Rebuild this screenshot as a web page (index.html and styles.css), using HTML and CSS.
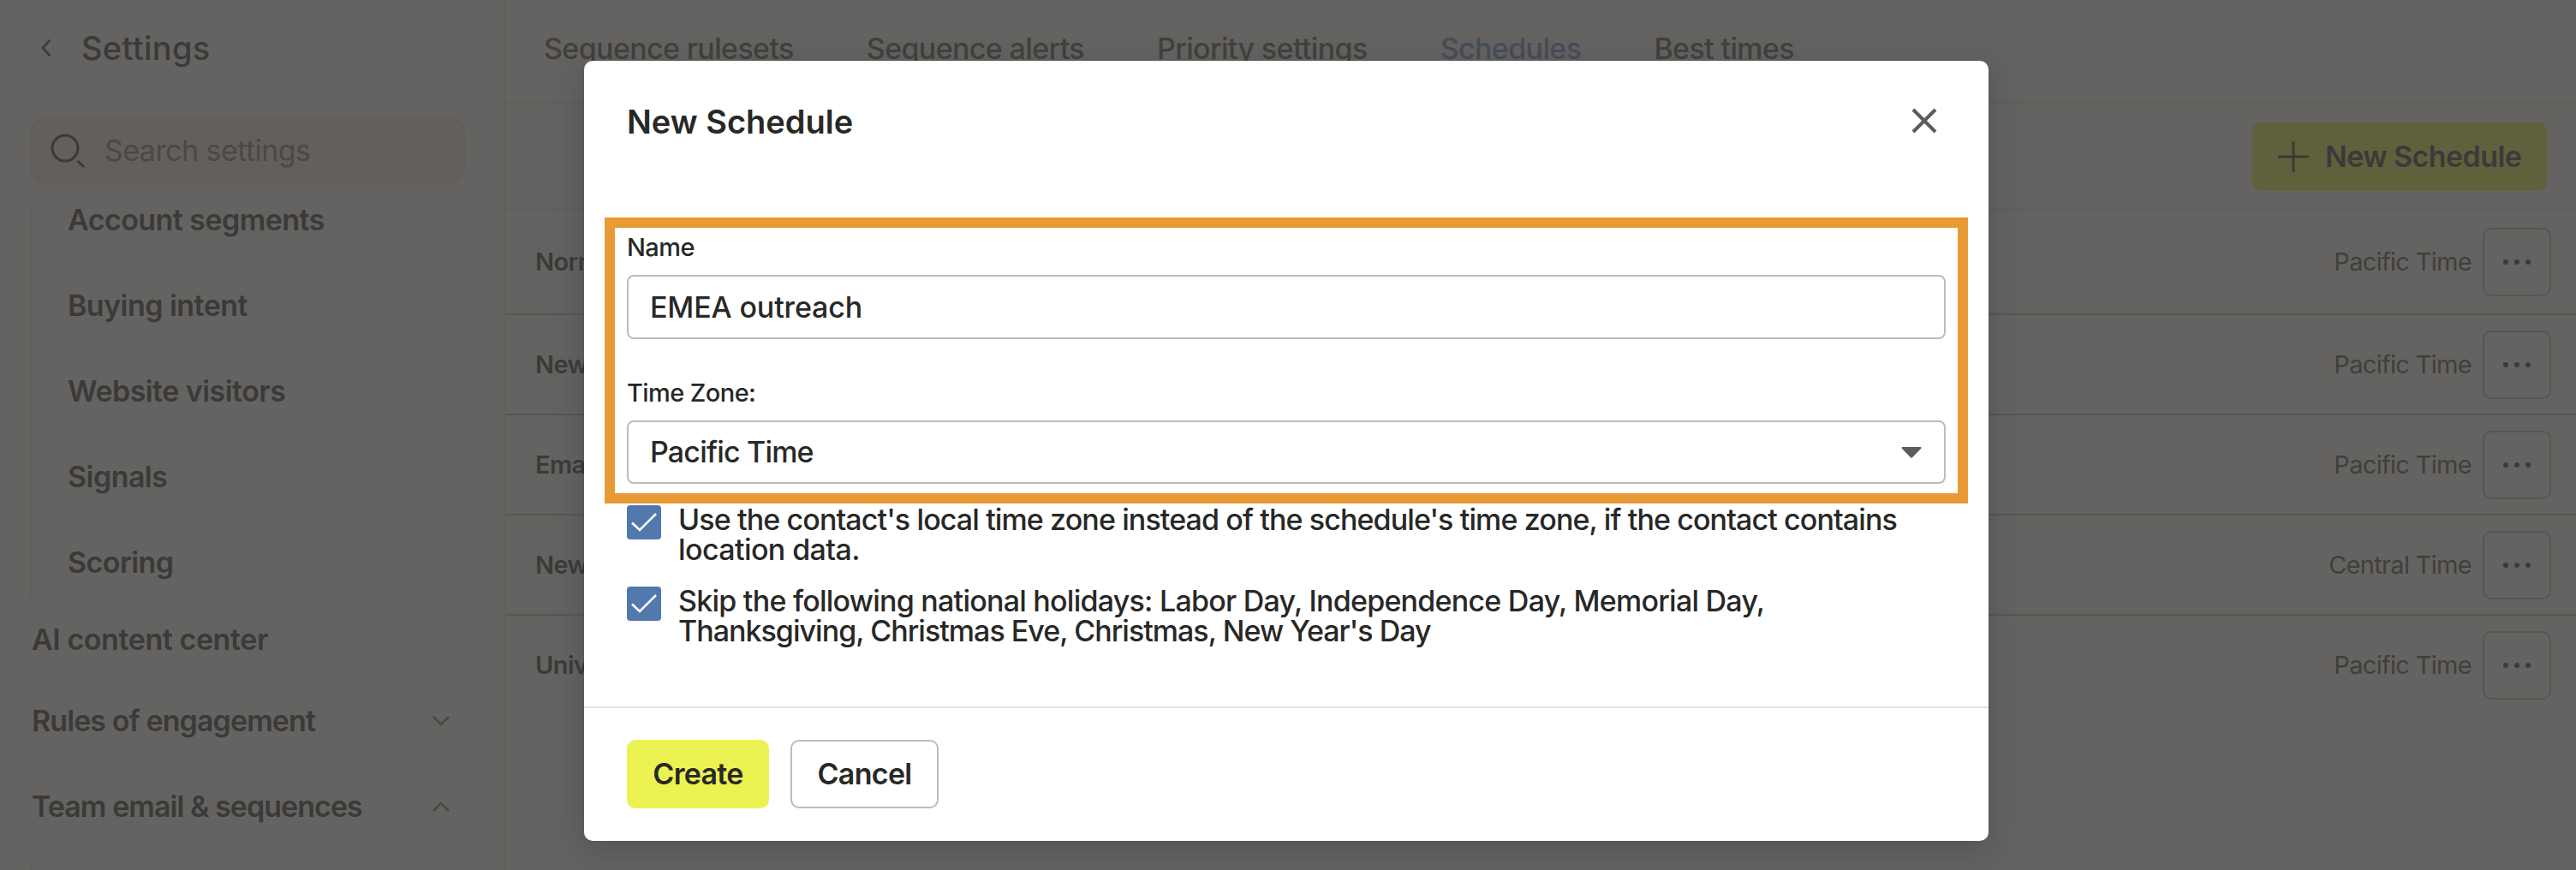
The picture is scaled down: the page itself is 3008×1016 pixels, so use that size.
FILE: index.html
```html
<!DOCTYPE html>
<html lang="en">
<head>
    <meta charset="UTF-8">
    <title>Schedules - Settings</title>
    <link rel="stylesheet" href="styles.css">
</head>
<body>
    <div id="app">
        <div class="sidebar">
            <div class="side-head">
                <svg class="back" width="12" height="22" viewBox="0 0 12 22"><path d="M10.500 1.500 2 11l8.500 9.500"/></svg>
                <span>Settings</span>
            </div>
            <div class="search">
                <svg width="42" height="42" viewBox="0 0 42 42"><circle cx="18" cy="18" r="15"/><path d="M32.500 33l7.500 7"/></svg>
                <span>Search settings</span>
            </div>
            <div class="nav">
                <ul class="sub">
                    <li>Account segments</li>
                    <li>Buying intent</li>
                    <li>Website visitors</li>
                    <li>Signals</li>
                    <li>Scoring</li>
                </ul>
                <div class="group ai">AI content center</div>
                <div class="group rules">
                    Rules of engagement
                    <svg width="22" height="14" viewBox="0 0 22 14"><path d="M2 2l9 9 9-9"/></svg>
                </div>
                <div class="group team">
                    Team email &amp; sequences
                    <svg width="22" height="14" viewBox="0 0 22 14"><path d="M2 12l9-9 9 9"/></svg>
                </div>
                <ul class="sub next"></ul>
            </div>
        </div>
        <div class="main">
            <ul class="tabs">
                <li>Sequence rulesets</li>
                <li>Sequence alerts</li>
                <li>Priority settings</li>
                <li class="current">Schedules</li>
                <li>Best times</li>
            </ul>
            <div class="toolbar">
                <div class="new-btn">
                    <svg width="36" height="36" viewBox="0 0 36 36"><path d="M18 0v36M0 18h36"/></svg>
                    <span>New Schedule</span>
                </div>
            </div>
            <ul class="rows">
                <li>
                    <b>Normal</b><span>Pacific Time</span>
                    <i class="more"><em></em><em></em><em></em></i>
                </li>
                <li>
                    <b>New</b><span>Pacific Time</span>
                    <i class="more"><em></em><em></em><em></em></i>
                </li>
                <li>
                    <b>Email</b><span>Pacific Time</span>
                    <i class="more"><em></em><em></em><em></em></i>
                </li>
                <li>
                    <b>New</b><span>Central Time</span>
                    <i class="more"><em></em><em></em><em></em></i>
                </li>
                <li>
                    <b>Univ</b><span>Pacific Time</span>
                    <i class="more"><em></em><em></em><em></em></i>
                </li>
            </ul>
        </div>
    </div>
    <div class="modal">
        <div class="modal-head">
            <h2>New Schedule</h2>
            <svg class="close" width="32" height="32" viewBox="0 0 32 32"><path d="M3 3l26 26M29 3L3 29"/></svg>
        </div>
        <div class="highlight">
            <label>Name</label>
            <div class="field name">EMEA outreach</div>
            <label class="zone">Time Zone:</label>
            <div class="field select">
                <span>Pacific Time</span>
                <svg width="24" height="13" viewBox="0 0 24 13"><path d="M1.500 0h21a1 1 0 0 1 .7 1.700L13 12.300a1.500 1.500 0 0 1-2 0L.8 1.700A1 1 0 0 1 1.500 0z"/></svg>
            </div>
        </div>
        <div class="checks">
            <div class="check">
                <svg width="40" height="40" viewBox="0 0 40 40"><rect width="40" height="40" rx="4"/><path d="M6 20.500l9 8.500 19-19"/></svg>
                <p class="local">
                    <span>Use the contact's local time zone instead of the schedule's time zone, if the contact contains</span>
                    <span class="loose">location data.</span>
                </p>
            </div>
            <div class="check">
                <svg width="40" height="40" viewBox="0 0 40 40"><rect width="40" height="40" rx="4"/><path d="M6 20.500l9 8.500 19-19"/></svg>
                <p class="holidays">
                    <span>Skip the following national holidays: Labor Day, Independence Day, Memorial Day,</span>
                    <span class="tight">Thanksgiving, Christmas Eve, Christmas, New Year's Day</span>
                </p>
            </div>
        </div>
        <div class="modal-foot">
            <div class="btn create">Create</div>
            <div class="btn cancel">Cancel</div>
        </div>
    </div>
</body>
</html>
```
FILE: styles.css
```css
body,div,ul,li,h2,p{
    padding:0;
    margin:0;
}
*{
    box-sizing:border-box;
}
body{
    font:500 34px/40px Inter,"Liberation Sans",sans-serif;
    letter-spacing:-0.6px;
    color:#3b3a38;
    background-color:#656361;
    overflow:hidden;
}
ul{
    list-style:none;
}
svg{
    display:block;
    flex:none;
    fill:none;
    stroke:#3b3a38;
}
#app{
    display:flex;
    height:1016px;
    overflow:hidden;
}
/* sidebar */
.sidebar{
    display:flex;
    flex-direction:column;
    flex:none;
    width:590px;
    height:1016px;
    border-right:2px solid #605e5b;
}
.side-head{
    display:flex;
    align-items:center;
    flex:none;
    height:112px;
    margin-bottom:24px;
    padding-left:48px;
    font-size:38px;
    font-weight:550;
    letter-spacing:0.3px;
}
.side-head svg{
    margin-right:35px;
    stroke-width:2.6;
}
.search{
    display:flex;
    align-items:center;
    flex:none;
    height:79px;
    margin:0 45px 31px 35px;
    padding-left:21px;
    border:2px solid #605e5b;
    border-radius:20px;
    background-color:#645f5b;
    color:#4c4844;
    font-weight:400;
    letter-spacing:-0.55px;
}
.search svg{
    margin-right:22px;
    stroke-width:3;
}
.nav{
    flex:1;
    min-height:0;
    padding-left:35px;
    font-weight:600;
}
.sub{
    border-left:2px solid #605e5b;
    letter-spacing:-0.55px;
}
.sub li{
    height:80px;
    margin-bottom:20px;
    padding-left:42px;
    line-height:82px;
}
/* first item is half scrolled under the search box */
.sub li:first-child{
    height:50px;
    line-height:22px;
}
.sub li:last-child{
    margin-bottom:0;
}
.sub.next{
    height:9px;
    margin-top:26px;
}
.group{
    display:flex;
    align-items:center;
    justify-content:space-between;
    height:80px;
    padding:0 62px 0 2px;
    letter-spacing:-0.91px;
}
.group svg{
    stroke:#4a4845;
    stroke-width:2.6;
}
.ai{
    margin-top:11px;
    letter-spacing:-0.42px;
}
.rules{
    margin-top:15px;
}
.team{
    margin-top:20px;
    letter-spacing:-0.96px;
}
/* page behind the dialog */
.main{
    flex:1;
}
.tabs{
    display:flex;
    gap:85px;
    height:121px;
    padding-left:45px;
    border-bottom:2px solid #605e5b;
    color:#42403c;
    line-height:114px;
    letter-spacing:-0.63px;
}
.tabs .current{
    color:#454d58;
}
.toolbar{
    display:flex;
    justify-content:flex-end;
    height:125px;
    padding:22px 34px 0 0;
    border-bottom:2px solid #605e5b;
}
.new-btn{
    display:flex;
    align-items:center;
    width:344px;
    height:80px;
    padding-left:30px;
    border-radius:10px;
    background-color:#60603d;
    font-weight:600;
}
.new-btn svg{
    margin-right:19px;
    stroke-width:3;
}
.rows li{
    display:flex;
    align-items:center;
    height:117px;
    padding:0 29px 0 35px;
    border-bottom:2px solid #575653;
    font-size:29px;
}
.rows li:first-child{
    height:122px;
}
.rows li:last-child{
    border-bottom-color:transparent;
}
.rows b{
    flex:1;
    font-weight:600;
}
.rows span{
    margin-right:13px;
    color:#403f3c;
    font-weight:400;
    letter-spacing:-0.69px;
}
.more{
    display:flex;
    align-items:center;
    justify-content:center;
    gap:7px;
    width:80px;
    height:80px;
    border:2px solid #575653;
    border-radius:10px;
}
.more em{
    width:6px;
    height:6px;
    border-radius:50%;
    background-color:#3b3a38;
}
/* dialog */
.modal{
    position:absolute;
    top:71px;
    left:682px;
    width:1640px;
    height:911px;
    border-radius:10px;
    background-color:#fff;
    box-shadow:0 10px 36px rgba(50,52,56,.35);
    color:#282826;
}
.modal-head{
    display:flex;
    justify-content:space-between;
    height:183px;
    padding:0 59px 0 50px;
}
.modal-head h2{
    font-size:38px;
    font-weight:600;
    line-height:143px;
    letter-spacing:0;
}
.close{
    margin-top:54px;
    stroke:#5d5b57;
    stroke-width:4;
}
.highlight{
    height:334px;
    margin:0 24px;
    padding:0 14px;
    border:12px solid #e89a35;
}
.highlight label{
    display:block;
    height:46px;
    margin-bottom:9px;
    font-size:29px;
    line-height:46px;
    letter-spacing:-0.58px;
}
.highlight .zone{
    margin-top:40px;
}
.field{
    display:flex;
    align-items:center;
    justify-content:space-between;
    padding:0 26px 0 25px;
    border:2px solid #bdbcb9;
    border-radius:8px;
}
.name{
    height:75px;
    letter-spacing:-0.15px;
}
.select{
    height:74px;
    letter-spacing:-0.8px;
}
.select svg{
    fill:#5d5b57;
    stroke:none;
}
.checks{
    height:237px;
    padding:2px 50px 0;
}
.check{
    display:flex;
    gap:20px;
    height:69px;
    margin-bottom:26px;
}
.check rect{
    fill:#5279ae;
    stroke:none;
}
.check path{
    stroke:#fff;
    stroke-width:2.6;
}
.check p{
    margin-top:-1px;
    line-height:35px;
    white-space:nowrap;
}
.check span{
    display:block;
}
.local{
    letter-spacing:-0.885px;
}
.local .loose{
    letter-spacing:-0.6px;
}
.holidays{
    letter-spacing:-0.755px;
}
.holidays .tight{
    letter-spacing:-0.98px;
}
.modal-foot{
    display:flex;
    gap:25px;
    height:157px;
    padding:37px 50px 0;
    border-top:2px solid #e3e3e2;
}
.btn{
    height:80px;
    border-radius:10px;
    font-weight:600;
    line-height:80px;
    text-align:center;
    letter-spacing:-0.7px;
}
.create{
    width:166px;
    background-color:#ebf252;
}
.cancel{
    width:173px;
    border:2px solid #bdbcb9;
    line-height:76px;
}
```
